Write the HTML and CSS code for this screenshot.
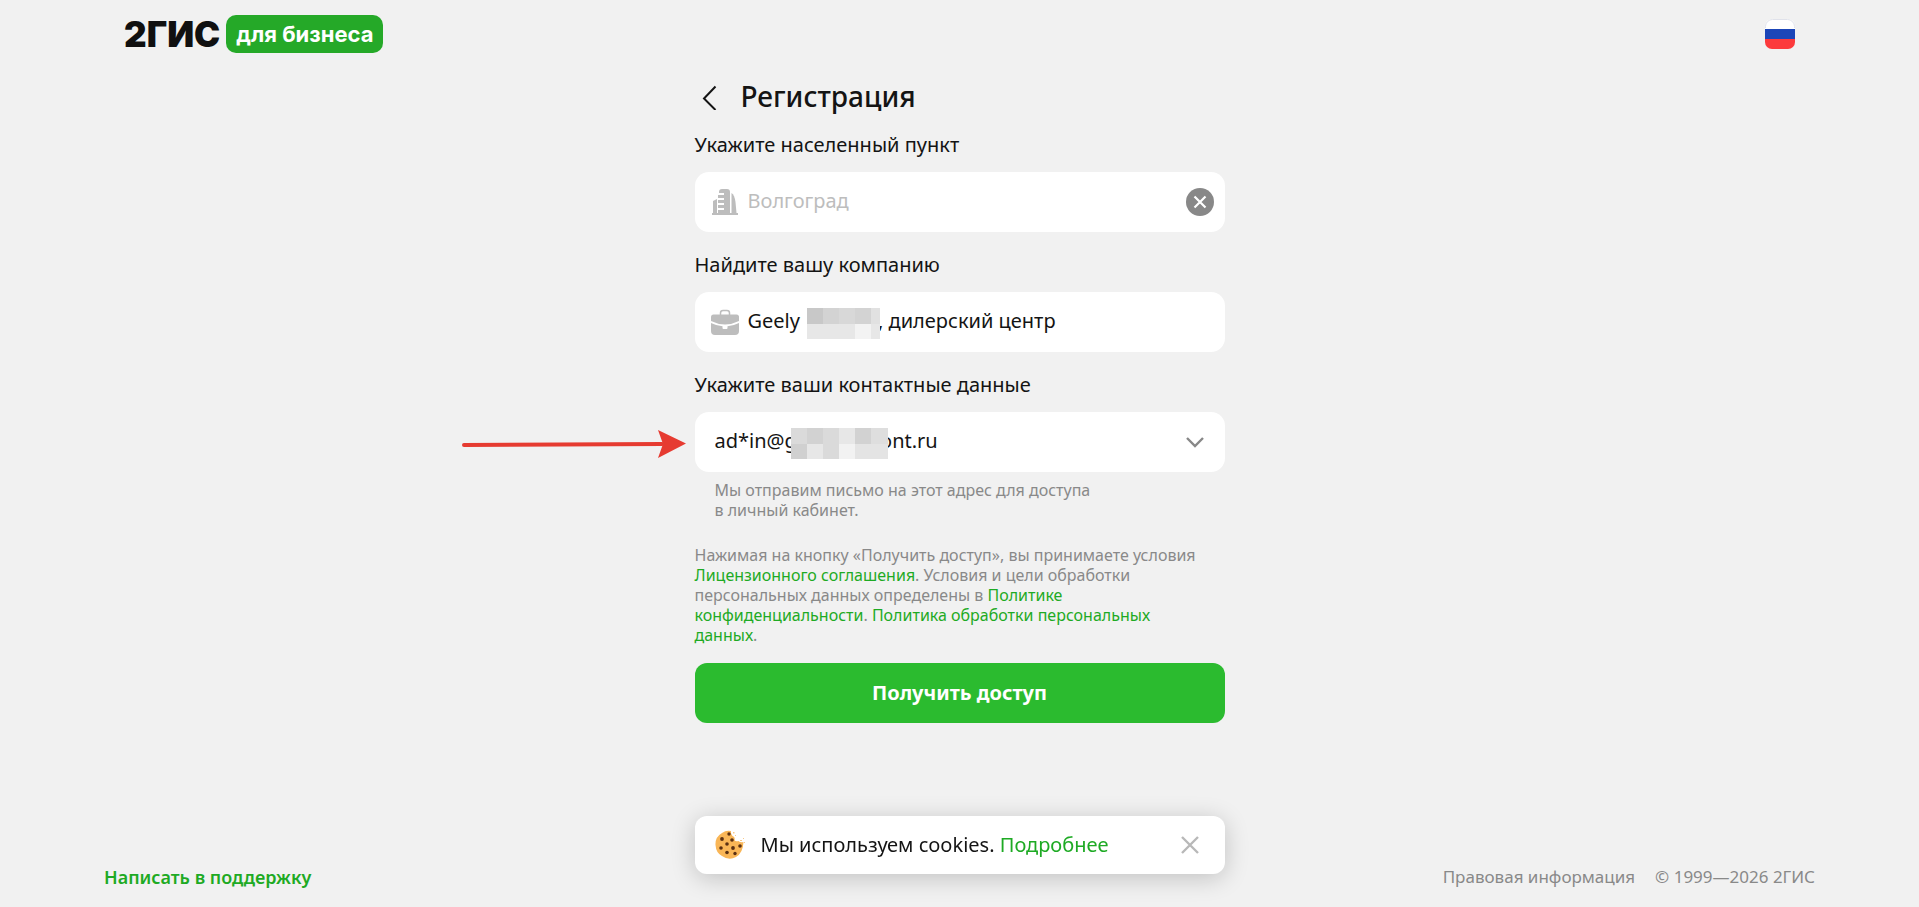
FILE: index.html
```html
<!DOCTYPE html>
<html lang="ru">
  <head>
    <meta charset="utf-8" />
    <meta name="viewport" content="width=device-width, initial-scale=1.0" />
    <title>Регистрация</title>
    <link rel="stylesheet" href="styles.css">
  </head>
  <body>
    <header class="header">
      <a class="logo" href="#">
        <span class="logo-name">2ГИС</span>
        <span class="logo-badge">для бизнеса</span>
      </a>
      <button class="lang-button" type="button" aria-label="Русский">
        <svg width="30" height="30" viewBox="0 0 30 30">
          <clipPath id="flagShape"><rect width="30" height="30" rx="7" /></clipPath>
          <g clip-path="url(#flagShape)">
            <rect width="30" height="10" fill="#fff" />
            <rect y="10" width="30" height="10" fill="#1c46b8" />
            <rect y="20" width="30" height="10" fill="#fc3a3c" />
          </g>
          <path d="M.5 9V7.500A7 7 0 0 1 7.500.5h15a7 7 0 0 1 7 7V9" fill="none" stroke="#e0e2ea" />
        </svg>
      </button>
    </header>

    <main class="main">
      <form class="form">
        <div class="title-row">
          <button class="icon-button" type="button" aria-label="Назад">
            <svg width="28" height="28" viewBox="0 0 28 28" fill="none" stroke="#141414" stroke-width="2">
              <path d="M20.500 4.500 9 16.500 20.500 28" />
            </svg>
          </button>
          <h1 class="title">Регистрация</h1>
        </div>

        <div class="field-group">
          <label class="label" for="city">Укажите населенный пункт</label>
          <div class="field">
            <svg class="field-icon" width="28" height="28" viewBox="0 0 28 28" fill="#bdbdbd">
              <path d="M1 25h26v2H1z" />
              <path d="M2 25V13l4-2v14z" />
              <path d="M7 25v-3h6v-2H7v-3h6v-2H7v-3h6v-2H7V7h6V5H8V4q0-3 3-3h5q3 0 3 3v21z" />
              <path d="M20.500 25V5q3 2 4 9l1 11z" />
            </svg>
            <input class="input" id="city" type="text" placeholder="Волгоград" />
            <button class="icon-button" type="button" aria-label="Очистить">
              <svg width="28" height="28" viewBox="0 0 28 28">
                <circle cx="14" cy="14" r="14" fill="#888" />
                <path d="m8.500 8.500 11 11m0-11-11 11" stroke="#fff" stroke-width="2.200" />
              </svg>
            </button>
          </div>
        </div>

        <div class="field-group">
          <label class="label" for="company">Найдите вашу компанию</label>
          <div class="field">
            <svg class="field-icon" width="28" height="28" viewBox="0 0 28 28">
              <path d="M9.500 7V5q0-2.500 2.500-2.500h4q2.500 0 2.500 2.500v2" fill="none" stroke="#bdbdbd" stroke-width="1.500" />
              <path d="M0 9q0-2.500 2.500-2.500h23Q28 6.500 28 9v4q-14 7-28 0z" fill="#bdbdbd" />
              <path d="M0 15q6 3 11.500 3.200V20q0 1 1 1h3q1 0 1-1v-1.800Q22 18 28 15v8q0 4-4 4H4q-4 0-4-4z" fill="#bdbdbd" />
            </svg>
            <input class="input" id="company" type="text" value="Geely &nbsp;&nbsp;&nbsp;&nbsp;&nbsp;&nbsp;&nbsp;&nbsp;&nbsp;&nbsp;&nbsp;&nbsp;&nbsp;&nbsp;, дилерский центр" />
            <svg class="mask mask-company" width="73" height="31" viewBox="0 0 73 31" shape-rendering="crispEdges">
              <rect width="73" height="16" fill="#d3d3d3" />
              <rect width="16" height="16" fill="#c8c8c8" />
              <rect x="32" width="16" height="16" fill="#d8d8d8" />
              <rect x="64" width="9" height="16" fill="#e1e1e1" />
              <rect y="16" width="73" height="15" fill="#e7e7e7" />
              <rect x="48" y="16" width="16" height="15" fill="#f3f3f3" />
            </svg>
          </div>
        </div>

        <div class="field-group">
          <label class="label" for="contact">Укажите ваши контактные данные</label>
          <div class="field">
            <select class="input" id="contact">
              <option>ad*in@g&nbsp;&nbsp;&nbsp;&nbsp;&nbsp;&nbsp;&nbsp;&nbsp;&nbsp;&nbsp;&nbsp;&nbsp;&nbsp;&nbsp;&nbsp;&nbsp;ont.ru</option>
            </select>
            <svg class="chevron" width="20" height="12" viewBox="0 0 20 12" fill="none" stroke="#888" stroke-width="2.400">
              <path d="m2 2 8 8 8-8" />
            </svg>
            <svg class="mask mask-contact" width="97" height="31" viewBox="0 0 97 31" shape-rendering="crispEdges">
              <rect width="97" height="31" fill="#dadada" />
              <rect x="16" width="16" height="16" fill="#d2d2d2" />
              <rect x="48" width="16" height="16" fill="#e7e7e7" />
              <rect x="64" width="16" height="16" fill="#d2d2d2" />
              <rect x="80" width="17" height="16" fill="#dedede" />
              <rect y="16" width="16" height="15" fill="#d0d0d0" />
              <rect x="16" y="16" width="16" height="15" fill="#e7e7e7" />
              <rect x="48" y="16" width="16" height="15" fill="#f2f2f2" />
              <rect x="64" y="16" width="33" height="15" fill="#e4e4e4" />
            </svg>
            <svg class="arrow" width="224" height="28" viewBox="0 0 224 28">
              <path d="M2 15 200 14" stroke="#e63b31" stroke-width="4" stroke-linecap="round" />
              <path d="M196 0 224 13.500 196 28 201 14z" fill="#e63b31" />
            </svg>
          </div>
          <p class="hint">Мы отправим письмо на этот адрес для доступа<br>в личный кабинет.</p>
        </div>

        <p class="legal">
          Нажимая на кнопку «Получить доступ», вы принимаете условия<br>
          <a href="#">Лицензионного соглашения</a>. Условия и цели обработки<br>
          персональных данных определены в <a href="#">Политике<br>
          конфиденциальности</a>. <a href="#">Политика обработки персональных<br>
          данных</a>.
        </p>

        <button class="submit" type="button">Получить доступ</button>
      </form>
    </main>

    <footer class="footer">
      <a class="support" href="#">Написать в поддержку</a>
      <div class="footer-info">
        <a href="#">Правовая информация</a>
        <span>© 1999—2026 2ГИС</span>
      </div>
    </footer>

    <div class="cookies">
      <svg width="30" height="30" viewBox="0 0 30 30">
        <path d="M16 1Q11 0 7 3 0 7 .5 15T7 26q7 5 14 1 7-4 7.500-15-3 1-5-1-3 1-4-1 1-3-2-4-2-2-1.500-5z" fill="#f9b657" />
        <path d="M18 2h1.500v1.500H18zM20 5h1v1h-1zM25 10h2v1h-2zM28 8h1v1h-1zM29 12h1v1h-1z" fill="#f9c987" />
        <g fill="#5a3013">
          <circle cx="14" cy="4" r="1.700" />
          <circle cx="7" cy="9" r="1.900" />
          <circle cx="17" cy="10" r="1.800" />
          <circle cx="12" cy="14" r="1.800" />
          <circle cx="25" cy="16" r="1.800" />
          <circle cx="6" cy="18" r="1.800" />
          <circle cx="18" cy="18" r="1.900" />
          <circle cx="12" cy="22.500" r="1.800" />
          <circle cx="20" cy="23.500" r="1.700" />
        </g>
      </svg>
      <p class="cookies-text">Мы используем cookies. <a href="#">Подробнее</a></p>
      <button class="icon-button" type="button" aria-label="Закрыть">
        <svg width="18" height="18" viewBox="0 0 18 18" stroke="#b8b8b8" stroke-width="2.400">
          <path d="m1 1 16 16M17 1 1 17" />
        </svg>
      </button>
    </div>
  </body>
</html>
```
FILE: styles.css
```css
:root {
  --bg-color: #f1f1f1;
  --text-color: #141414;
  --muted-color: #898989;
  --link-color: #1eaa24;
  --button-color: #2bbb2f;
}

* {
  box-sizing: border-box;
}

body {
  display: flex;
  flex-direction: column;
  min-height: 100vh;
  margin: 0;
  font-family: "Noto Sans", sans-serif;
  font-size: 20px;
  line-height: 24px;
  background-color: var(--bg-color);
  color: var(--text-color);
}

a {
  color: var(--link-color);
  text-decoration: none;
}

svg {
  display: block;
  flex-shrink: 0;
}

button {
  padding: 0;
  border: none;
  background: none;
  font-family: inherit;
  cursor: pointer;
}

.header {
  display: flex;
  justify-content: space-between;
  align-items: center;
  height: 68px;
  padding: 0 124px;
}

.logo {
  display: flex;
  align-items: center;
  gap: 6px;
  font-family: Inter, sans-serif;
}

.logo-name {
  font-size: 35px;
  font-weight: 900;
  color: #101010;
}

.logo-badge {
  padding: 7px 10px;
  border-radius: 10px;
  background-color: #25a928;
  color: #fff;
  font-size: 22px;
  font-weight: 700;
}

.main {
  flex-grow: 1;
}

.form {
  width: 530px;
  margin: 0 auto;
}

.title-row {
  display: flex;
  align-items: center;
  gap: 18px;
  height: 56px;
}

.title {
  margin: 0;
  font-size: 28px;
  line-height: 36px;
  font-weight: 500;
}

.field-group {
  margin-bottom: 12px;
}

.label {
  display: block;
  padding: 9px 0 15px;
}

.field {
  position: relative;
  display: flex;
  align-items: center;
  height: 60px;
  padding: 0 11px 0 16px;
  border-radius: 14px;
  background-color: #fff;
}

.field-icon {
  margin-right: 9px;
}

.input {
  flex-grow: 1;
  min-width: 0;
  padding: 0 0 2px;
  border: none;
  outline: none;
  background: none;
  appearance: none;
  font: inherit;
  color: inherit;
}

select.input {
  padding-left: 4px;
}

.input::placeholder {
  color: #bdbdbd;
  opacity: 1;
}

.chevron {
  margin-right: 9px;
}

.mask {
  position: absolute;
  top: 16px;
}

.mask-company {
  left: 112px;
}

.mask-contact {
  left: 96px;
}

/* pointer to the contact field */
.arrow {
  position: absolute;
  right: 100%;
  top: 18px;
  margin-right: 9px;
}

.hint {
  margin: 8px 20px 0;
  font-size: 16px;
  line-height: 20px;
  color: var(--muted-color);
}

.legal {
  margin: 25px 0 18px;
  font-size: 16px;
  line-height: 20px;
  color: var(--muted-color);
  white-space: nowrap;
}

.submit {
  width: 100%;
  height: 60px;
  padding-bottom: 2px;
  border-radius: 12px;
  background-color: var(--button-color);
  color: #fff;
  font-size: 20px;
  font-weight: 700;
}

.submit:hover {
  opacity: 0.9;
}

.footer {
  display: flex;
  justify-content: space-between;
  padding: 0 104px 18px;
  font-size: 17px;
}

.support {
  font-size: 18px;
  font-weight: 600;
}

.footer-info {
  display: flex;
  gap: 20px;
  color: var(--muted-color);
}

.footer-info a {
  color: inherit;
}

.cookies {
  position: fixed;
  bottom: 33px;
  left: 50%;
  display: flex;
  align-items: center;
  width: 530px;
  height: 58px;
  padding: 0 26px 0 20px;
  border-radius: 12px;
  background-color: #fff;
  box-shadow: 0 4px 24px rgba(0, 0, 0, 0.2);
  transform: translateX(-50%);
}

.cookies-text {
  flex-grow: 1;
  margin: 0 0 0 16px;
}
```
